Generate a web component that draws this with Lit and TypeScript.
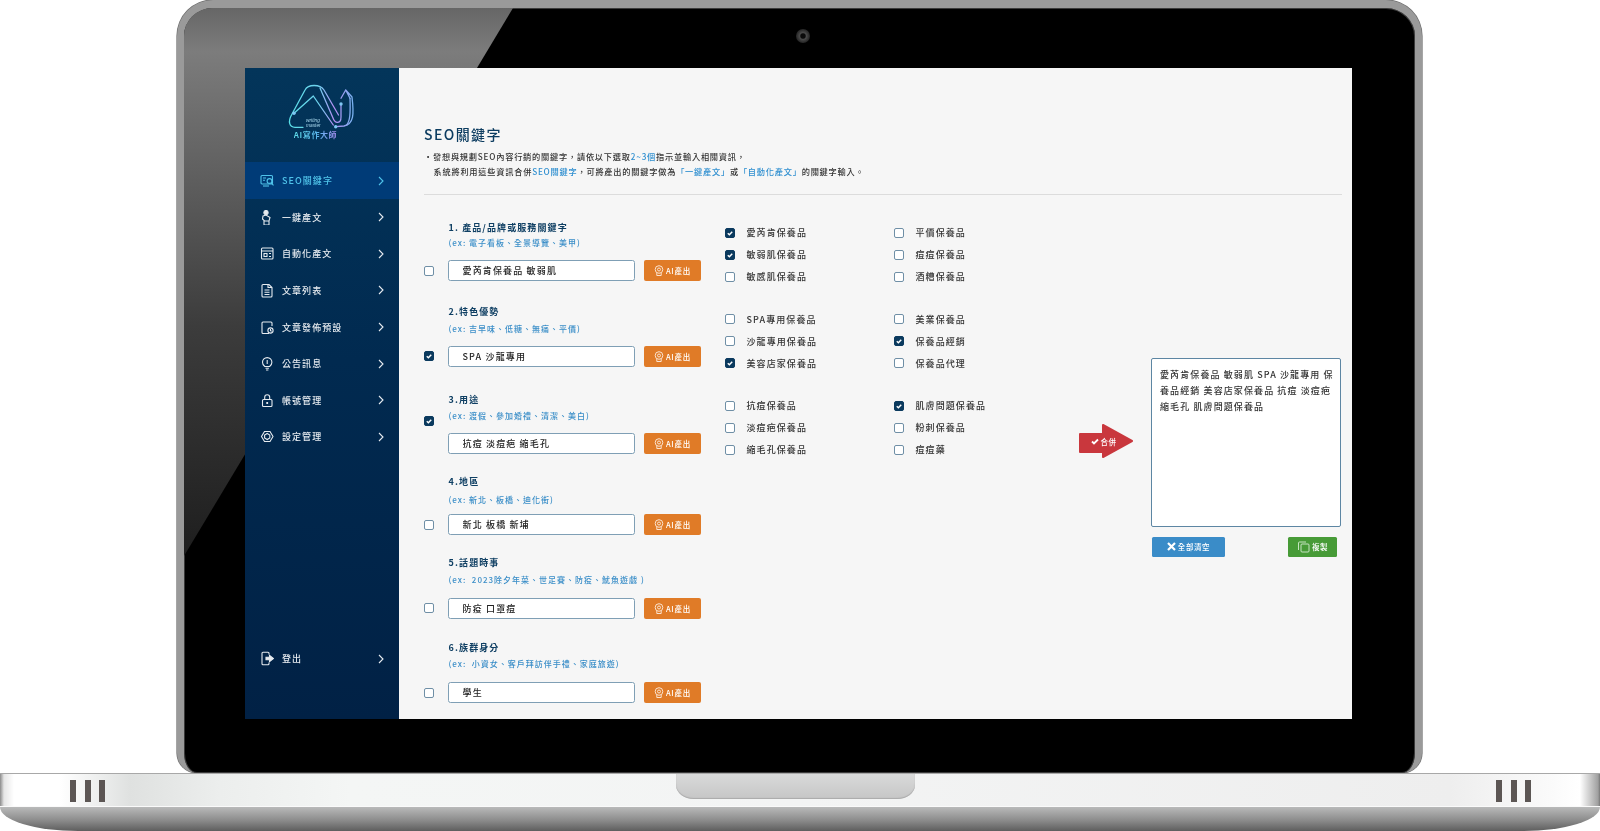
import { LitElement, html, css, svg } from "lit";
import { customElement, state } from "lit/decorators.js";

const ICONS: Record<string, unknown> = {
  seo: svg`<rect x="1" y="2.500" width="11.500" height="8.500" rx="1"/><path d="M3 13h6"/><circle cx="9.500" cy="8" r="2.400" fill="#003b77"/><path d="M11.200 9.800l2.300 2.600M3 5h3M3 7.300h2"/>`,
  one: svg`<circle cx="6" cy="2.600" r="2.100" fill="currentColor"/><path d="M3 6l3-1 4 2.500-1 3.500H4.500L2.500 9 3 6zM4 11v4M9 11v4M4 15h5"/>`,
  auto: svg`<rect x="1.500" y="2" width="11.500" height="11" rx="1"/><path d="M1.500 5h11.500M4 7.500h3v3H4zM9 7.500h2M9 10.500h2"/>`,
  list: svg`<path d="M3 1.500h6l3 3V13a1 1 0 0 1-1 1H3a1 1 0 0 1-1-1V2.500a1 1 0 0 1 1-1z"/><path d="M8 1.500v3h4M4.500 7h5M4.500 9.300h5M4.500 11.500h5"/>`,
  plan: svg`<path d="M12 6V3a1 1 0 0 0-1-1H3a1 1 0 0 0-1 1v9.500a1 1 0 0 0 1 1h6"/><circle cx="10.500" cy="10.500" r="2.600"/><path d="M10.500 9v1.700l1.200.6"/>`,
  bulb: svg`<path d="M4.800 10.500C3.400 9.500 2.500 8 2.500 6.300a4.700 4.700 0 0 1 9.400 0c0 1.700-.9 3.200-2.300 4.200z"/><path d="M5.500 12.300h3.400M6 14h2.400M7.200 4v4"/>`,
  lock: svg`<rect x="2.500" y="6.500" width="9.500" height="7" rx="1"/><path d="M4.700 6.500V4.300a2.500 2.500 0 0 1 5 0v2.200"/><path d="M7.200 9v2" stroke-width="1.800"/>`,
  gear: svg`<path d="M4.500 2.500h5.500l3 5-3 5H4.500l-3-5z"/><path d="M7.200 4.500l2.600 1.500v3L7.200 10.500 4.600 9V6z"/>`,
  out: svg`<path d="M9 3.500V2.300a1 1 0 0 0-1-1H3a1 1 0 0 0-1 1v10.400a1 1 0 0 0 1 1h5a1 1 0 0 0 1-1v-1.200"/><path d="M6 6.300h3.500V4.300l4 3.200-4 3.200V8.700H6z" fill="currentColor"/>`,
};

const NAV = [
  ["seo", "SEO關鍵字"], ["one", "一鍵產文"], ["auto", "自動化產文"], ["list", "文章列表"],
  ["plan", "文章發佈預設"], ["bulb", "公告訊息"], ["lock", "帳號管理"], ["gear", "設定管理"],
];

const GROUPS = [
  { label: "1. 產品/品牌或服務關鍵字", hint: "(ex: 電子看板、全景導覽、美甲)", value: "愛芮肯保養品 敏弱肌", on: false, top: 0, g1: 1, g2: 10.5, cb: 5.5 },
  { label: "2.特色優勢", hint: "(ex: 吉早味、低糖、無痛、平價)", value: "SPA 沙龍專用", on: true, top: 24, g1: 3, g2: 9.5, cb: 5.5 },
  { label: "3.用途", hint: "(ex: 渡假、參加婚禮、清潔、美白)", value: "抗痘 淡痘疤 縮毛孔", on: true, top: 26.5, g1: 2, g2: 10, cb: 28 },
  { label: "4.地區", hint: "(ex: 新北、板橋、迪化街)", value: "新北 板橋 新埔", on: false, top: 21, g1: 4, g2: 7, cb: 5.5 },
  { label: "5.話題時事", hint: "(ex:  2023除夕年菜、世足賽、防疫、魷魚遊戲 )", value: "防疫 口罩痘", on: false, top: 21, g1: 3, g2: 10.5, cb: 5.5 },
  { label: "6.族群身分", hint: "(ex:  小資女、客戶拜訪伴手禮、家庭旅遊)", value: "學生", on: false, top: 22.5, g1: 2, g2: 11, cb: 5.5 },
];

const KEYWORDS: [string, boolean][][] = [
  [["愛芮肯保養品", true], ["平價保養品", false], ["敏弱肌保養品", true], ["痘痘保養品", false], ["敏感肌保養品", false], ["酒糟保養品", false]],
  [["SPA專用保養品", false], ["美業保養品", false], ["沙龍專用保養品", false], ["保養品經銷", true], ["美容店家保養品", true], ["保養品代理", false]],
  [["抗痘保養品", false], ["肌膚問題保養品", true], ["淡痘疤保養品", false], ["粉刺保養品", false], ["縮毛孔保養品", false], ["痘痘藥", false]],
];

const MERGED = "愛芮肯保養品 敏弱肌 SPA 沙龍專用 保養品經銷 美容店家保養品 抗痘 淡痘疤 縮毛孔 肌膚問題保養品";

const chevron = html`<svg class="chev" viewBox="0 0 6 10"><path d="M1 1l4 4-4 4"/></svg>`;
const check = html`<svg viewBox="0 0 10 10"><path d="M2.200 5.200l2 1.900 3.600-3.800"/></svg>`;

@customElement("app-root")
export class AppRoot extends LitElement {
  @state() active = 0;

  static styles = css`
    :host { display: block; width: 1600px; height: 831px; overflow: hidden; background: #fff;
      font-family: "Noto Sans CJK TC", "Liberation Sans", sans-serif; }
    * { box-sizing: border-box; }
    .lid { position: relative; width: 1245px; height: 773px; margin-left: 177px; padding: 60px 63px 0 61px;
      background: #000; border-style: solid; border-color: #9a9a9a; border-width: 8px 7px 0 7px;
      border-radius: 36px 36px 20px 20px / 36px 36px 20px 20px;
      box-shadow: inset 0 0 0 1px #3a3a3a, 0 0 0 .6px #6a6a6a; }
    .reflect { position: absolute; left: 0; top: 0; width: 329px; height: 548px;
      background: linear-gradient(180deg, #666 0%, #7c7c7c 8%, #3c3c3c 58%, #1e1e1e 100%);
      clip-path: polygon(0 0, 100% 0, 0 100%); border-top-left-radius: 28px; }
    .cam { position: absolute; left: 612px; top: 21px; width: 14px; height: 14px; border-radius: 50%;
      background: radial-gradient(circle at 50% 50%, #0a0a0a 0 22%, #4a4a4a 34%, #2c2c2c 62%, #151515 100%); }
    .screen { position: relative; display: flex; width: 1107px; height: 651px; overflow: hidden; background: #f6f6f6; filter: blur(.3px); }

    aside { width: 154px; flex: none; display: flex; flex-direction: column;
      background: linear-gradient(180deg, #03355a 0%, #012a50 45%, #012145 100%); color: #e6ebf0; }
    .logo { height: 94px; display: flex; flex-direction: column; align-items: center; padding: 16px 0 0 0; }
    .logo svg { width: 68px; height: 46px; display: block; flex: none; }
    .logo text { font-family: "Liberation Sans", sans-serif; font-size: 4.800px; font-style: italic; fill: #a8d8ee; }
    .brand { margin-left: -13px; margin-top: -.3px; font-size: 8px; line-height: 10px; font-weight: 700; letter-spacing: .6px; white-space: nowrap;
      background: linear-gradient(90deg, #5fdbe8, #5bb6ee 55%, #a98cf0); -webkit-background-clip: text; background-clip: text; -webkit-text-fill-color: transparent; }
    nav { display: flex; flex-direction: column; }
    .item { height: 36.600px; display: flex; align-items: center; padding: 0 15px; font-size: 9px; font-weight: 500; letter-spacing: 1.050px; white-space: nowrap; }
    .item.first { height: 37px; }
    .item.on { background: #003b77; color: #4fc3ea; }
    .item .ic { width: 14px; height: 15px; flex: none; fill: none; stroke: currentColor; stroke-width: 1.100; margin-right: 8px; }
    .item span { flex: 1; }
    .chev { width: 6px; height: 10px; flex: none; fill: none; stroke: currentColor; stroke-width: 1.100; }
    .logout { margin-top: auto; margin-bottom: 42px; }

    main { flex: 1; min-width: 0; padding: 57px 10px 0 25px; }
    h1 { margin: 0; height: 18px; font-size: 14px; line-height: 18px; font-weight: 500; letter-spacing: 1.400px; color: #0c3c60; }
    .desc { margin: 5.500px 0 0; font-size: 8.200px; line-height: 15px; font-weight: 500; letter-spacing: .78px; color: #333; white-space: nowrap; }
    .desc div + div { padding-left: 9.500px; }
    .desc b { font-weight: 500; color: #2f8fd0; }
    hr { margin: 15.500px 0 0; height: 1px; border: 0; background: #dcdcdc; }

    .content { display: flex; align-items: flex-start; margin-top: 25.500px; }
    .left { width: 277px; flex: none; margin-right: 24px; }
    .group { display: grid; grid-template-columns: 24px 1fr; }
    .group > .cb { align-self: end; }
    .label { height: 14px; padding-left: .6px; font-size: 9px; line-height: 14px; font-weight: 700; letter-spacing: 1.100px; color: #0f3f63; white-space: pre; }
    .hint { height: 14px; padding-left: .4px; font-size: 8px; line-height: 14px; letter-spacing: 1px; color: #3a8ec8; white-space: pre; font-weight: 500; }
    .inrow { display: flex; align-items: center; gap: 9.500px; }
    input.txt { width: 186.500px; height: 21px; padding: 0 13.500px; border: 1px solid #7f9fb5; border-radius: 2.500px; background: #fff;
      font: 500 9px "Noto Sans CJK TC", sans-serif; letter-spacing: 1.150px; color: #222; outline: none; }
    .ai { width: 57px; height: 21px; padding: 0; display: flex; align-items: center; justify-content: center; gap: 2px; border: 0; border-radius: 2px;
      background: #e07b27; color: #fff; font: 500 7.500px "Noto Sans CJK TC", sans-serif; letter-spacing: .8px; }
    .ai svg { width: 10px; height: 11px; fill: none; stroke: #fbe3cf; stroke-width: 1; }

    .cb { width: 10px; height: 10px; flex: none; display: block; border: 1.100px solid #6f8fa6; border-radius: 2px; background: #fff; }
    .cb.on { background: #0b3a5e; border-color: #0b3a5e; }
    .cb svg { display: block; width: 100%; height: 100%; fill: none; stroke: #fff; stroke-width: 1.800; }

    .kw { width: 330px; flex: none; margin-top: 1px; display: flex; flex-direction: column; gap: 20.500px; }
    .kwg { display: grid; grid-template-columns: 169px 1fr; grid-auto-rows: 22px; align-items: center; }
    .kwi { display: flex; align-items: center; gap: 11.500px; font-size: 9px; font-weight: 500; letter-spacing: 1.080px; color: #333; white-space: nowrap; }

    .merge { position: relative; width: 54px; height: 34px; flex: none; margin: 203px 18px 0 24px; padding: 2px 5px 0 0; display: flex; align-items: center; justify-content: center; gap: 2px;
      border: 0; background: none; color: #fff; font: 500 7.500px "Noto Sans CJK TC", sans-serif; letter-spacing: .5px; }
    .merge .shape { position: absolute; inset: 0; width: 54px; height: 34px; fill: #c9373d; stroke: #c9373d; stroke-width: 2; stroke-linejoin: round; }
    .merge .lbl { position: relative; display: flex; align-items: center; gap: 2px; }
    .merge .tick { width: 8px; height: 7px; fill: none; stroke: #fff; stroke-width: 1.800; }

    .right { width: 190px; flex: none; margin-top: 137.700px; }
    textarea { display: block; width: 190px; height: 168.500px; padding: 7.500px 6px 0 8px; resize: none; border: 1px solid #5d86a3; border-radius: 2px; background: #fff;
      font: 500 9px/16px "Noto Sans CJK TC", sans-serif; letter-spacing: 1.100px; color: #333; outline: none; overflow: hidden; }
    .actions { display: flex; justify-content: space-between; margin: 10px 4px 0 1px; }
    .actions button { height: 20.500px; padding: 0; display: flex; align-items: center; justify-content: center; gap: 2px; border: 0; border-radius: 1.500px; color: #fff;
      font: 500 7.500px "Noto Sans CJK TC", sans-serif; letter-spacing: .6px; }
    .clear { width: 73px; background: #3a8cc8; }
    .copy { width: 49px; background: #479b37; }
    .actions svg { width: 9px; height: 9px; fill: none; stroke: #fff; }
    .clear svg { stroke-width: 2.200; }
    .copy svg { width: 13px; height: 13px; stroke-width: .9; stroke: #d5ecd0; }

    .base { position: relative; width: 1600px; height: 58px; }
    .deck { position: relative; display: flex; justify-content: space-between; height: 33px; padding: 6px 69px 0 70px;
      background: linear-gradient(90deg, #8b8b8b 0, #e6e6e6 4px, #fff 14px, #fff 60px, #dfe1e0 130px, #eceeed 220px, #f4f6f5 350px, #f3f4f4 800px, #eeeeee 1450px, #fafafa 1550px, #ffffff 1580px, #a0a0a0 1598px, #777 1600px);
      border-top: 1px solid #a8a8a8; }
    .vents { display: flex; gap: 8.500px; }
    .vents i { display: block; width: 6px; height: 21.500px; background: #5c5654; }
    .notch { position: absolute; left: 676px; top: 0; width: 239px; height: 24.500px; border-radius: 0 0 18px 18px / 0 0 14px 14px;
      background: linear-gradient(180deg, #d9dada, #c6c6c6); box-shadow: inset 0 -1px 1px #aaa; }
    .under { height: 25px; border-top: 1px solid #fafafa; border-radius: 0 0 78px 78px / 0 0 24px 24px;
      background: linear-gradient(180deg, #b9baba 0%, #8c8c8c 55%, #5e5e5e 100%); }
  `;

  private cb(on: boolean, mb?: number) {
    return html`<span class="cb ${on ? "on" : ""}" style=${mb === undefined ? "" : `margin-bottom:${mb}px`} role="checkbox" aria-checked=${on}>${on ? check : null}</span>`;
  }

  render() {
    return html`
      <div class="lid">
        <div class="reflect"></div>
        <div class="cam"></div>
        <div class="screen">
          <aside>
            <div class="logo">
              <svg viewBox="0 0 68 46" aria-hidden="true">
                <defs>
                  <linearGradient id="lg" gradientUnits="userSpaceOnUse" x1="0" x2="68" y1="0" y2="0">
                    <stop offset="0" stop-color="#58dfe6"/><stop offset=".45" stop-color="#6fd2ee"/><stop offset=".68" stop-color="#b58cf2"/><stop offset="1" stop-color="#6fb8f0"/>
                  </linearGradient>
                </defs>
                <g fill="none" stroke="url(#lg)" stroke-width="1.300" stroke-linecap="round" stroke-linejoin="round">
                  <path d="M15 43.300H7C1 43.300 0 37 3.500 31L17 6C20 0 32 0 36 6L50.500 31"/>
                  <path d="M6 29.300L25.300 12 45.300 41"/>
                  <path d="M53 20V33C53 40 47 40 45 34L32 4"/>
                  <path d="M47.700 42.700L56 42C66 40 66 30 64 13L57.700 6 53 14.300M57.700 6L62 14.300"/>
                  <path d="M58.700 41C62 37 62.500 30 62 14.300"/>
                </g>
                <circle cx="6" cy="29.300" r="1.700" fill="#7fc7f4"/>
                <circle cx="53" cy="20" r="1.700" fill="#7fc7f4"/>
                <circle cx="47.700" cy="42.700" r="1.700" fill="#7fc7f4"/>
                <text x="18" y="38">writing</text>
                <text x="18" y="43">master</text>
              </svg>
              <div class="brand">AI寫作大師</div>
            </div>
            <nav>
              ${NAV.map(([ic, name], i) => html`
                <div class="item ${i === this.active ? "on" : ""} ${i === 0 ? "first" : ""}">
                  <svg class="ic" viewBox="0 0 14 15">${ICONS[ic as string]}</svg><span>${name}</span>${chevron}
                </div>`)}
            </nav>
            <div class="item logout">
              <svg class="ic" viewBox="0 0 14 15">${ICONS.out}</svg><span>登出</span>${chevron}
            </div>
          </aside>
          <main>
            <h1>SEO關鍵字</h1>
            <div class="desc">
              <div>・發想與規劃SEO內容行銷的關鍵字，請依以下選取<b>2~3個</b>指示並輸入相關資訊，</div>
              <div>系統將利用這些資訊合併<b>SEO關鍵字</b>，可將產出的關鍵字做為<b>「一鍵產文」</b>或<b>「自動化產文」</b>的關鍵字輸入。</div>
            </div>
            <hr />
            <div class="content">
              <div class="left">
                ${GROUPS.map((g) => html`
                  <div class="group" style="margin-top:${g.top}px">
                    ${this.cb(g.on, g.cb)}
                    <div>
                      <div class="label">${g.label}</div>
                      <div class="hint" style="margin-top:${g.g1}px">${g.hint}</div>
                      <div class="inrow" style="margin-top:${g.g2}px">
                        <input class="txt" .value=${g.value} />
                        <button class="ai">
                          <svg viewBox="0 0 10 11"><circle cx="5" cy="4.500" r="3.800"/><circle cx="5" cy="4.500" r="1.500"/><path d="M2.800 8v2.500h4.400V8"/></svg>AI產出
                        </button>
                      </div>
                    </div>
                  </div>`)}
              </div>
              <div class="kw">
                ${KEYWORDS.map((grp) => html`<div class="kwg">
                  ${grp.map(([t, on]) => html`<label class="kwi">${this.cb(on)}${t}</label>`)}
                </div>`)}
              </div>
              <button class="merge">
                <svg class="shape" viewBox="0 0 54 34"><polygon points="1,10 24,10 24,1 53,17 24,33 24,28 1,28"/></svg>
                <span class="lbl"><svg class="tick" viewBox="0 0 8 7"><path d="M1 3.500l2 2 4-4"/></svg>合併</span>
              </button>
              <div class="right">
                <textarea .value=${MERGED}></textarea>
                <div class="actions">
                  <button class="clear"><svg viewBox="0 0 9 9"><path d="M1 1l7 7M8 1L1 8"/></svg>全部清空</button>
                  <button class="copy"><svg viewBox="0 0 13 13"><path d="M9 2H2.500a1 1 0 0 0-1 1v7"/><rect x="4" y="4" width="8" height="8" rx="1"/></svg>複製</button>
                </div>
              </div>
            </div>
          </main>
        </div>
      </div>
      <div class="base">
        <div class="deck">
          <div class="vents"><i></i><i></i><i></i></div>
          <div class="notch"></div>
          <div class="vents"><i></i><i></i><i></i></div>
        </div>
        <div class="under"></div>
      </div>
    `;
  }
}
